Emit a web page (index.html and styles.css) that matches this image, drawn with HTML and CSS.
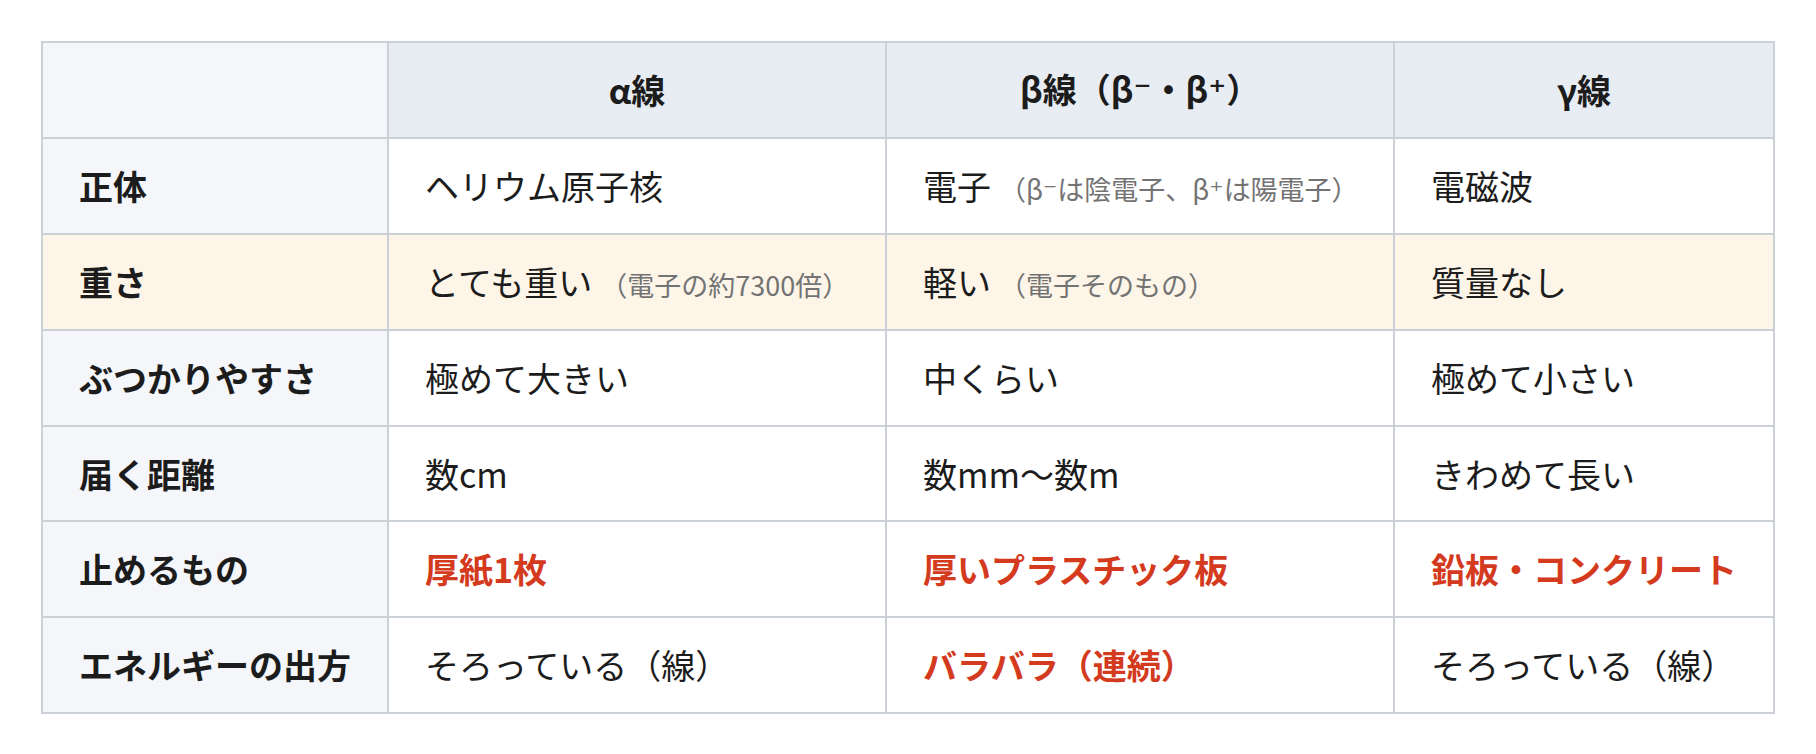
FILE: index.html
```html
<!DOCTYPE html>
<html lang="ja">
<head>
<meta charset="utf-8">
<title>放射線の比較</title>
<link rel="stylesheet" href="styles.css">
</head>
<body>
<table class="cmp">
  <colgroup>
    <col class="c-label">
    <col class="c-alpha">
    <col class="c-beta">
    <col class="c-gamma">
  </colgroup>
  <thead>
    <tr>
      <th class="corner"></th>
      <th>α線</th>
      <th>β線（β<span class="sup">⁻</span>・β<span class="sup">⁺</span>）</th>
      <th>γ線</th>
    </tr>
  </thead>
  <tbody>
    <tr>
      <th class="label">正体</th>
      <td>ヘリウム原子核</td>
      <td>電子<span class="note">（β<span class="sup">⁻</span>は陰電子、β<span class="sup">⁺</span>は陽電子）</span></td>
      <td>電磁波</td>
    </tr>
    <tr class="hl">
      <th class="label">重さ</th>
      <td>とても重い<span class="note">（電子の約7300倍）</span></td>
      <td>軽い<span class="note">（電子そのもの）</span></td>
      <td>質量なし</td>
    </tr>
    <tr>
      <th class="label">ぶつかりやすさ</th>
      <td>極めて大きい</td>
      <td>中くらい</td>
      <td>極めて小さい</td>
    </tr>
    <tr>
      <th class="label">届く距離</th>
      <td>数cm</td>
      <td>数mm〜数m</td>
      <td>きわめて長い</td>
    </tr>
    <tr>
      <th class="label">止めるもの</th>
      <td class="red">厚紙1枚</td>
      <td class="red">厚いプラスチック板</td>
      <td class="red">鉛板・コンクリート</td>
    </tr>
    <tr>
      <th class="label">エネルギーの出方</th>
      <td>そろっている（線）</td>
      <td class="red">バラバラ（連続）</td>
      <td>そろっている（線）</td>
    </tr>
  </tbody>
</table>
</body>
</html>
```

FILE: styles.css
```css
html, body {
  margin: 0;
  background: #ffffff;
}
body {
  padding: 41px 40px 40px 41px;
  font-family: "Noto Sans CJK JP", "Noto Sans", sans-serif;
  color: #1c1c1c;
}
.cmp {
  border-collapse: collapse;
  table-layout: fixed;
  width: 1732px;
  font-size: 34px;
}
.c-label { width: 346px; }
.c-alpha { width: 498px; }
.c-beta { width: 508px; }
.c-gamma { width: 380px; }
.cmp th, .cmp td {
  border: 2px solid #cbcfd6;
  padding: 0 36px;
  height: 95.9px;
  line-height: 50px;
  white-space: nowrap;
  text-align: left;
  vertical-align: middle;
  box-sizing: border-box;
}
.cmp td {
  font-weight: 400;
  background: #ffffff;
}
.cmp thead th {
  background: #e8ecf3;
  font-weight: 700;
  text-align: center;
}
.cmp thead th.corner,
.cmp th.label {
  background: #f4f6fa;
}
.cmp th.label {
  font-weight: 700;
}
.cmp tr.hl th.label,
.cmp tr.hl td {
  background: #fdf5e8;
}
.note {
  font-size: 27px;
  line-height: 1;
  color: #737373;
  margin-left: 8px;
}
.sup {
  font-family: "DejaVu Sans", sans-serif;
}
.cmp td.red {
  color: #d43a1e;
  font-weight: 700;
}
```
